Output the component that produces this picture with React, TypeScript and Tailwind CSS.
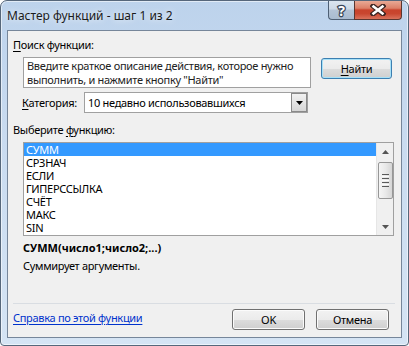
import React from "react";

const FONT = '"Noto Sans", "Open Sans", Arial, sans-serif';

function Btn({ children, w, focused }: { children: React.ReactNode; w: string; focused?: boolean }) {
  return (
    <div
      className={`${w} h-[21px] rounded-[3px] border ${
        focused ? "border-[#3c7fb1] shadow-[inset_0_0_0_1px_#a7e1f8]" : "border-[#707070] shadow-[inset_0_0_0_1px_#fbfbfb]"
      } bg-[linear-gradient(to_bottom,#f2f2f2_0%,#ebebeb_50%,#dddddd_50%,#cfcfcf_100%)] flex items-center justify-center text-[11px] leading-[15px] tracking-[-0.3px] text-black whitespace-nowrap`}
    >
      {children}
    </div>
  );
}

const items = ["СУММ", "СРЗНАЧ", "ЕСЛИ", "ГИПЕРССЫЛКА", "СЧЁТ", "МАКС", "SIN"];

export default function App() {
  return (
    <div className="w-[409px] h-[346px] overflow-hidden bg-white" style={{ fontFamily: FONT }}>
      <div className="w-[409px] h-[346px] flex flex-col rounded-t-[7px] rounded-b-[4px] border border-[#56677b] bg-[linear-gradient(to_bottom,#bdd3ec,#c9dbf0_40%,#d5e4f4)] shadow-[inset_0_0_0_1px_rgba(255,255,255,0.55)]">
        {/* Title bar */}
        <div className="h-[29px] flex justify-between items-start">
          <div className="ml-[6px] mt-[7px] text-[12px] leading-[15px] text-[#1b1b1b] whitespace-nowrap [text-shadow:0_0_6px_rgba(255,255,255,0.9)]">
            Мастер функций - шаг 1 из 2
          </div>
          <div className="flex mr-[6px]">
            <div className="w-[26px] h-[19px] border border-r-0 border-t-0 border-[#4e5f74] rounded-bl-[4px] bg-[linear-gradient(to_bottom,#dbe5ef_0%,#cdd9e6_45%,#b3c3d6_50%,#a9bbd0_100%)] flex items-center justify-center">
              <span className="text-[14px] leading-[14px] font-bold text-white [paint-order:stroke_fill] [-webkit-text-stroke:2.5px_#3a4658] mt-[1px]">?</span>
            </div>
            <div className="w-[48px] h-[19px] border border-t-0 border-[#5a3630] rounded-br-[4px] bg-[linear-gradient(to_bottom,#e8a995_0%,#dc8068_40%,#c8432c_50%,#c9462f_70%,#d9725c_100%)] flex items-center justify-center">
              <svg width="16" height="12" viewBox="0 0 16 12">
                <path d="M3 2 L13 10 M13 2 L3 10" stroke="#3d2522" strokeWidth="5" strokeLinecap="square" />
                <path d="M3.5 2.5 L12.5 9.5 M12.5 2.5 L3.5 9.5" stroke="#ffffff" strokeWidth="2.6" strokeLinecap="square" />
              </svg>
            </div>
          </div>
        </div>

        {/* Client area */}
        <div className="mx-[6px] h-[308px] border border-[#76869a] bg-[#f0f0f0] flex flex-col text-[11px] leading-[15px] tracking-[-0.3px] text-black whitespace-nowrap">
          <div className="ml-[5px] mt-[6px]">
            <span className="underline underline-offset-2">П</span>оиск функции:
          </div>

          <div className="mt-[5px] flex items-start">
            <div className="ml-[15px] w-[288px] h-[31px] border border-[#a0a0a0] bg-white pl-[3px] pt-[1px] leading-[14px] text-[#222]">
              Введите краткое описание действия, которое нужно
              <br />
              выполнить, и нажмите кнопку "Найти"
            </div>
            <div className="ml-[10px] mt-[1px]">
              <Btn w="w-[71px]" focused>
                <span>
                  <span className="underline underline-offset-2">Н</span>айти
                </span>
              </Btn>
            </div>
          </div>

          <div className="mt-[4px] flex items-center">
            <div className="ml-[14px] w-[62px]">
              <span className="underline underline-offset-2">К</span>атегория:
            </div>
            <div className="w-[224px] h-[21px] border border-[#a0a0a0] bg-white flex items-center justify-between">
              <span className="pl-[3px]">10 недавно использовавшихся</span>
              <div className="w-[16px] h-[19px] border border-[#8a8a8a] bg-[linear-gradient(to_bottom,#f2f2f2,#d6d6d6)] flex items-center justify-center">
                <svg width="7" height="4" viewBox="0 0 7 4">
                  <path d="M0 0 H7 L3.5 4 Z" fill="#000" />
                </svg>
              </div>
            </div>
          </div>

          <div className="ml-[5px] mt-[9px]">
            Выберите <span className="underline underline-offset-2">ф</span>ункцию:
          </div>

          <div className="ml-[15px] mt-[5px] w-[371px] h-[94px] border border-[#a0a0a0] bg-white flex">
            <div className="w-[352px] flex flex-col">
              {items.map((it, i) => (
                <div
                  key={it}
                  className={`h-[13px] pl-[2px] leading-[13px] ${i === 0 ? "bg-[#3399ff] text-white" : "text-black"}`}
                >
                  {it}
                </div>
              ))}
            </div>
            <div className="w-[17px] h-[92px] bg-[#f0f0f0] border-l border-[#e6e6e6] flex flex-col items-center">
              <div className="h-[17px] flex items-center justify-center">
                <svg width="7" height="4" viewBox="0 0 7 4">
                  <path d="M0 4 H7 L3.5 0 Z" fill="#555" />
                </svg>
              </div>
              <div className="mt-[2px] w-[15px] h-[37px] rounded-[2px] border border-[#979797] bg-[linear-gradient(to_right,#f5f5f5,#e9e9e9_50%,#d6d6d6)] flex flex-col items-center justify-center gap-[1px]">
                <div className="w-[7px] h-[1px] bg-[#5a5a5a]" />
                <div className="w-[7px] h-[1px] bg-[#fafafa]" />
                <div className="w-[7px] h-[1px] bg-[#5a5a5a]" />
                <div className="w-[7px] h-[1px] bg-[#fafafa]" />
                <div className="w-[7px] h-[1px] bg-[#5a5a5a]" />
                <div className="w-[7px] h-[1px] bg-[#fafafa]" />
                <div className="w-[7px] h-[1px] bg-[#5a5a5a]" />
              </div>
              <div className="flex-1" />
              <div className="h-[17px] flex items-center justify-center">
                <svg width="7" height="4" viewBox="0 0 7 4">
                  <path d="M0 0 H7 L3.5 4 Z" fill="#555" />
                </svg>
              </div>
            </div>
          </div>

          <div className="ml-[15px] mt-[4px] font-bold tracking-normal">СУММ(число1;число2;...)</div>
          <div className="ml-[15px] mt-[3px]">Суммирует аргументы.</div>

          <div className="ml-[5px] mt-[30px] w-[382px] h-[1px] bg-[#d9dde2]" />

          <div className="mt-[5px] flex items-start">
            <div className="ml-[5px] mt-[1px] text-[#0033cc] underline underline-offset-2 w-[219px]">
              Справка по этой функции
            </div>
            <Btn w="w-[73px]">OK</Btn>
            <div className="ml-[11px]">
              <Btn w="w-[73px]">Отмена</Btn>
            </div>
          </div>
        </div>
      </div>
    </div>
  );
}
